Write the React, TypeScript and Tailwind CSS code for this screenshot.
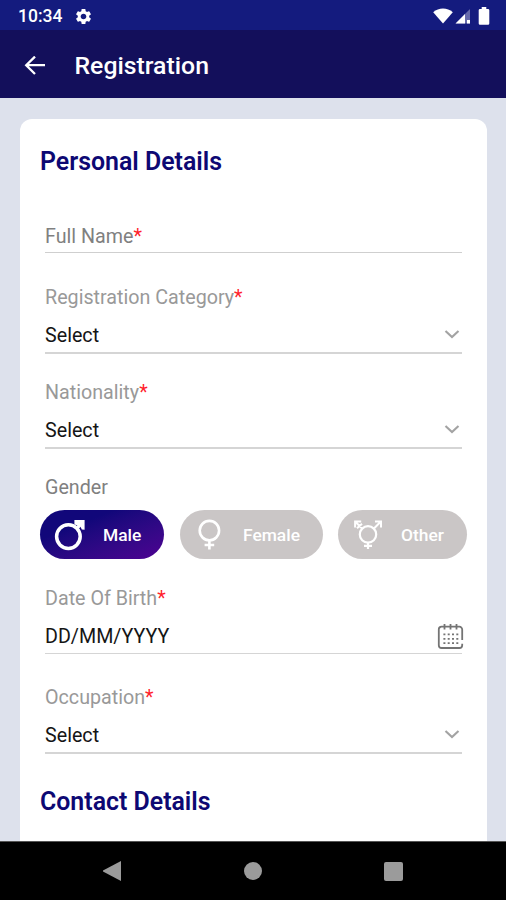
import type { ReactNode } from "react";
import { clsx } from "clsx";
import { MdSettings } from "react-icons/md";

interface FieldProps {
  label: string;
  value: string;
  className?: string;
  icon: ReactNode;
}

function Required() {
  return <span className="text-[#ff1f2d]">*</span>;
}

function ChevronIcon() {
  return (
    <svg viewBox="0 0 16 10" fill="none" className="mr-[2px] h-[10px] w-4">
      <path d="M1.5 1 8 7.1 14.5 1" stroke="#a3a3a3" strokeWidth="2.1" />
    </svg>
  );
}

function CalendarIcon() {
  return (
    <svg viewBox="0 0 27 27" fill="none" className="-mr-[2px] h-[27px] w-[27px]">
      <path
        d="M25.2 17V6.5a2.8 2.8 0 0 0-2.8-2.8H4.6a2.8 2.8 0 0 0-2.8 2.8v15.7A2.8 2.8 0 0 0 4.6 25h17.8a2.8 2.8 0 0 0 2.8-2.8v-1.4"
        stroke="#747474"
        strokeWidth="1.8"
      />
      <path d="M7.5 1v5.4M13.5 1v5.4M19.5 1v5.4" stroke="#747474" strokeWidth="1.8" />
      <path
        d="M6.4 11.4h15M6.4 15.8h15M6.4 20.2h15"
        stroke="#747474"
        strokeWidth="1.7"
        strokeDasharray="2 2.3"
      />
    </svg>
  );
}

function MaleIcon() {
  return (
    <svg viewBox="0 0 32 32" fill="none" className="h-8 w-8">
      <circle cx="14.4" cy="17.6" r="11.8" stroke="#fff" strokeWidth="3.5" />
      <path d="m22.5 9.5 5-5" stroke="#fff" strokeWidth="3.5" />
      <path d="M20.4.9h10.2v9.9l-2.8-.2-1.6-3.6-5.8-1.6z" fill="#fff" />
    </svg>
  );
}

function FemaleIcon() {
  return (
    <svg viewBox="0 0 24 32" fill="none" stroke="#fff" className="h-8 w-6">
      <circle cx="12.4" cy="11.6" r="9.7" strokeWidth="2.6" />
      <path d="M12.4 21.2v9.2M7.6 26h9.6" strokeWidth="2.6" />
    </svg>
  );
}

function OtherIcon() {
  return (
    <svg viewBox="0 0 30 32" fill="none" stroke="#fff" className="h-8 w-[30px]">
      <circle cx="15" cy="15.4" r="8.2" strokeWidth="2.2" />
      <path d="m20.7 9.7 7.2-7.2M22 2.5h6v6M9.3 9.7 2.1 2.5M8.2 2.5H2.1v6M4 9.300l5-4.600" strokeWidth="2" />
      <path d="M15 23.6v6.400M11 26.800h8" strokeWidth="2.200" />
    </svg>
  );
}

function Field({ label, value, className, icon }: FieldProps) {
  return (
    <div className={clsx("ml-[25px] mr-[25px] border-[#d5d5d5]", className)}>
      <div className="h-7 text-[19.7px] leading-[30px] text-[#999]">
        {label}
        <Required />
      </div>
      <div className="mt-[10px] flex h-[31px] items-center justify-between pb-[3px] text-[19.7px] leading-7 text-[#151515]">
        <span className="pt-[2px]">{value}</span>
        {icon}
      </div>
    </div>
  );
}

function StatusBar() {
  return (
    <div className="flex h-[30px] shrink-0 items-center bg-[#141b7e] pl-[18px] pr-4 pt-[2px] text-white">
      <span className="pt-px text-[17.5px] font-medium leading-none">10:34</span>
      <MdSettings className="ml-3 h-[19px] w-[19px]" />
      <div className="ml-auto flex items-center pb-px">
        <svg viewBox="0 0 20 16" className="h-4 w-5" fill="#fff">
          <path d="M10 15.5.2 4.2C3 1.8 6.4.5 10 .5s7 1.3 9.8 3.7z" />
        </svg>
        <svg viewBox="0 0 16 16" className="ml-[2px] h-4 w-4">
          <path d="M15 1v14.5H.5z" fill="#fff" opacity=".35" />
          <path d="M10 6v9.5H.5zM12 12h3v3.5h-3z" fill="#fff" />
        </svg>
        <svg viewBox="0 0 12 18" className="ml-[7px] h-[18px] w-3" fill="#fff">
          <path d="M3.7 0h4.6v2H10a1.3 1.3 0 0 1 1.3 1.3v13.2a1.3 1.3 0 0 1-1.3 1.3H2a1.3 1.3 0 0 1-1.3-1.3V3.3A1.3 1.3 0 0 1 2 2h1.7z" />
        </svg>
      </div>
    </div>
  );
}

function AppBar() {
  return (
    <div className="flex h-[68px] shrink-0 items-center bg-[#130f5b] pl-6 pt-[3px] text-white">
      <svg viewBox="0 0 22 20" fill="none" stroke="#fff" strokeWidth="2.3" className="h-5 w-[22px]">
        <path d="M21 9.2H2.5M11 .6 2.2 9.2 11 18" />
      </svg>
      <h1 className="ml-[28.5px] pt-px text-[24.8px] font-medium leading-8">Registration</h1>
    </div>
  );
}

function NavBar() {
  return (
    <div className="flex h-[59px] shrink-0 items-center border-t border-[#555] bg-black pl-[103px] pr-[103px]">
      <div className="flex w-full items-center justify-between">
        <svg viewBox="0 0 18 20" className="h-5 w-[18px]" fill="#9b9b9b">
          <path d="M18 0v20L0 10.5v-1z" />
        </svg>
        <div className="ml-[1px] h-[18px] w-[18px] rounded-full bg-[#9b9b9b]" />
        <div className="h-[19px] w-[19px] rounded-[2px] bg-[#9b9b9b]" />
      </div>
    </div>
  );
}

export default function App() {
  return (
    <div className="flex h-[900px] w-[506px] flex-col overflow-hidden bg-[#dde1ec] font-['Roboto',sans-serif]">
      <StatusBar />
      <AppBar />

      <main className="min-h-0 flex-1 overflow-hidden pl-5 pr-[19px] pt-[21px]">
        <div className="h-[800px] rounded-[12px] bg-white pt-[26px]">
          <h2 className="ml-5 h-8 text-[24.9px] font-semibold leading-[34px] text-[#0d0873]">Personal Details</h2>

          <div className="ml-[25px] mr-[25px] mt-[45px] h-[31px] border-b border-[#cfcfcf] text-[19.7px] leading-[30px] text-[#808080]">
            Full Name
            <Required />
          </div>

          <Field className="mt-[30px] border-b-2" label="Registration Category" value="Select" icon={<ChevronIcon />} />
          <Field className="mt-6 border-b-2" label="Nationality" value="Select" icon={<ChevronIcon />} />

          {/* Gender */}
          <div className="ml-[25px] mt-6 h-7 text-[19.7px] leading-[30px] text-[#808080]">Gender</div>
          <div className="ml-5 mt-[9px] flex h-[49px] text-[17.4px] font-medium text-white">
            <button className="flex w-[124px] items-center rounded-full bg-linear-to-br from-[#11077a] from-30% to-[#4e0092] pl-[14px]">
              <MaleIcon />
              <span className="ml-[17px] pt-px">Male</span>
            </button>
            <button className="ml-[16px] flex w-[143px] items-center rounded-full bg-[#cac6c6] pl-[17px]">
              <FemaleIcon />
              <span className="ml-[22px] pt-px">Female</span>
            </button>
            <button className="ml-[15px] flex w-[129px] items-center rounded-full bg-[#cac6c6] pl-[15px]">
              <OtherIcon />
              <span className="ml-[18px] pt-px">Other</span>
            </button>
          </div>

          <Field className="mt-[25px] border-b" label="Date Of Birth" value="DD/MM/YYYY" icon={<CalendarIcon />} />
          <Field className="mt-[29px] border-b-2" label="Occupation" value="Select" icon={<ChevronIcon />} />

          <h2 className="ml-5 mt-[31px] h-8 text-[24.9px] font-semibold leading-[34px] text-[#0d0873]">
            Contact Details
          </h2>
        </div>
      </main>

      <NavBar />
    </div>
  );
}
